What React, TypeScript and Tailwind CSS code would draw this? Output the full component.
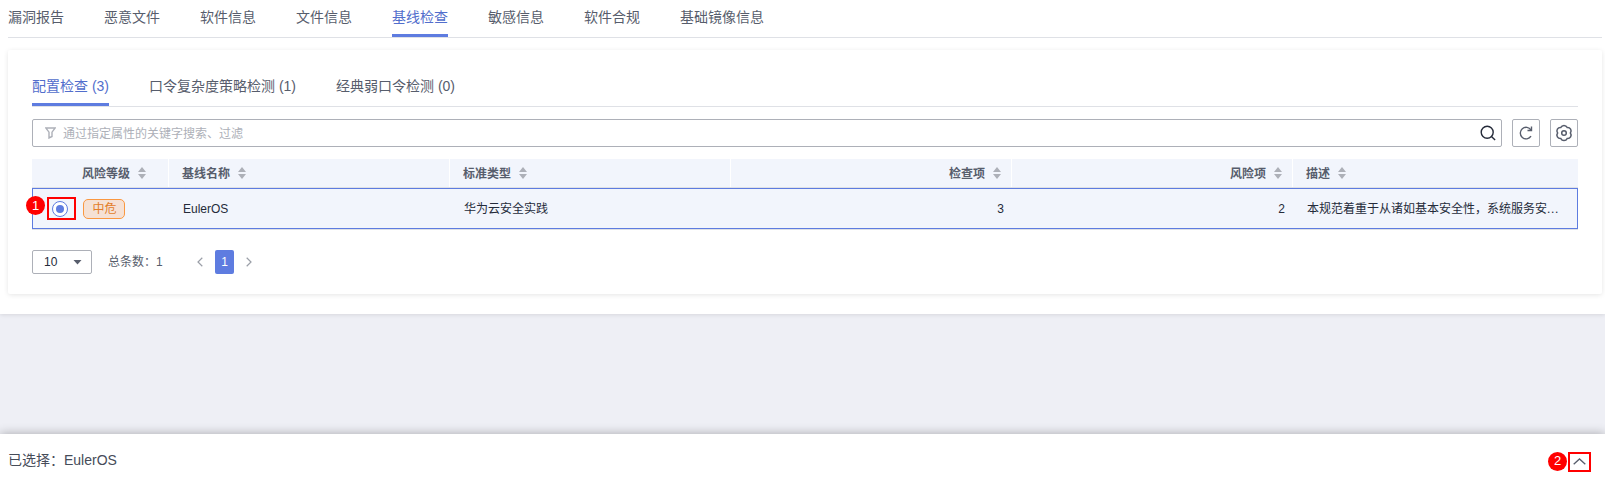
import type { ReactNode } from 'react';

const FONT = "font-['Liberation_Sans','Noto_Sans_CJK_SC',sans-serif]";

const topTabs = ['漏洞报告', '恶意文件', '软件信息', '文件信息', '基线检查', '敏感信息', '软件合规', '基础镜像信息'];
const subTabs = ['配置检查 (3)', '口令复杂度策略检测 (1)', '经典弱口令检测 (0)'];

function Sort() {
  return (
    <svg width="8" height="12" viewBox="0 0 8 12" fill="#adb0b8" className="mb-0.5 ml-2 shrink-0">
      <path d="M4 0 8 5H0zM4 12 0 7h8z" />
    </svg>
  );
}

function Tabs({ items, active }: { items: string[]; active: number }) {
  return (
    <div className="flex gap-10 border-b border-[#dfe1e6] text-sm text-[#575d6c]">
      {items.map((t, i) => (
        <button
          key={t}
          className={
            i === active
              ? 'h-[37px] whitespace-nowrap border-b-[3px] border-[#5e7ce0] text-[#526ecc]'
              : 'h-[37px] whitespace-nowrap border-b-[3px] border-transparent'
          }
        >
          {t}
        </button>
      ))}
    </div>
  );
}

function Badge({ n, className }: { n: number; className: string }) {
  return (
    <span className={`absolute flex size-[19px] items-center justify-center rounded-full bg-[#ff0000] text-[13px] text-white ${className}`}>
      {n}
    </span>
  );
}

function IconButton({ children }: { children: ReactNode }) {
  return (
    <button className="flex size-7 items-center justify-center rounded-xs border border-[#adb0b8] text-[#575d6c]">
      {children}
    </button>
  );
}

const COLS = 'grid grid-cols-[136px_281px_281px_281px_281px_286px]';

export default function App() {
  return (
    <div className={`flex h-[478px] flex-col overflow-hidden bg-[#eeeff5] text-[#252b3a] ${FONT}`}>
      <div className="h-[314px] shrink-0 bg-white pl-2 shadow-[0_1px_4px_rgba(0,0,0,0.1)]">
        <div className="pr-[3px]">
          <Tabs items={topTabs} active={4} />
          <section className="mt-3 h-[244px] rounded-xs px-6 pt-[19px] shadow-[0_1px_5px_rgba(0,0,0,0.1)]">
            <Tabs items={subTabs} active={0} />
            <div className="mt-3 flex gap-2.5">
              <div className="flex h-7 flex-1 items-center rounded-xs border border-[#adb0b8] pl-[13px] pr-[5px] text-xs text-[#adb0b8]">
                <svg width="11" height="12" viewBox="0 0 11 12" fill="none" stroke="currentColor" strokeWidth="1.4" className="-ml-px">
                  <path d="M.8 1h9.4L7 5.2V9.5L4 11V5.2z" />
                </svg>
                <span className="ml-[7px] flex-1 pt-0.5">通过指定属性的关键字搜索、过滤</span>
                <svg width="16" height="16" viewBox="0 0 16 16" fill="none" stroke="#252b3a" strokeWidth="1.4">
                  <circle cx="7.2" cy="7.2" r="6" />
                  <path d="m11.5 11.5 3.6 3.6" />
                </svg>
              </div>
              <IconButton>
                <svg width="16" height="16" viewBox="0 0 16 16" fill="none" stroke="currentColor" strokeWidth="1.4">
                  <path d="M13 5A5.8 5.8 0 1 0 13 11.2M13.5 1.5v4H9.5" />
                </svg>
              </IconButton>
              <IconButton>
                <svg width="18" height="18" viewBox="0 0 18 18" fill="none" stroke="currentColor" strokeWidth="1.5">
                  <path d="M5.8 3.46A3.5 3.5 0 0 1 12.2 3.46A3.5 3.5 0 0 1 15.4 9A3.5 3.5 0 0 1 12.2 14.54A3.5 3.5 0 0 1 5.8 14.54A3.5 3.5 0 0 1 2.6 9A3.5 3.5 0 0 1 5.8 3.46z" />
                  <circle cx="9" cy="9" r="2.3" />
                </svg>
              </IconButton>
            </div>
            <div className={`${COLS} mt-3 h-7 text-xs font-bold text-[#575d6c]`}>
              <div className="flex items-center bg-[#f2f5fc] pl-[50px] pt-0.5">风险等级<Sort /></div>
              <div className="ml-px flex items-center bg-[#f2f5fc] pl-[13px] pt-0.5">基线名称<Sort /></div>
              <div className="ml-px flex items-center bg-[#f2f5fc] pl-[13px] pt-0.5">标准类型<Sort /></div>
              <div className="ml-px flex items-center justify-end bg-[#f2f5fc] pr-2.5 pt-0.5">检查项<Sort /></div>
              <div className="ml-px flex items-center justify-end bg-[#f2f5fc] pr-2.5 pt-0.5">风险项<Sort /></div>
              <div className="ml-px flex items-center bg-[#f2f5fc] pl-[13px] pt-0.5">描述<Sort /></div>
            </div>
            <div className="relative h-[43px] border-y border-[#dfe1e6]">
              <div className={`${COLS} h-[41px] items-center border border-[#5e7ce0] bg-[#f2f5fc] text-xs`}>
                <div className="flex items-center pl-[19px]">
                  <span className="flex size-4 items-center justify-center rounded-full border border-[#5e7ce0] bg-white">
                    <span className="size-2 rounded-full bg-[#5e7ce0]" />
                  </span>
                  <span className="ml-[15px] flex h-5 w-[42px] items-center justify-center rounded-[5px] border border-[#fa9841] bg-[#f5e1d5] pl-px text-[#e37d29]">
                    中危
                  </span>
                </div>
                <div className="pl-3.5">EulerOS</div>
                <div className="pl-3.5">华为云安全实践</div>
                <div className="pr-2 text-right">3</div>
                <div className="pr-2 text-right">2</div>
                <div className="pl-3.5">
                  本规范着重于从诸如基本安全性，系统服务安<span className="tracking-[0.6px]">...</span>
                </div>
              </div>
              <span className="absolute left-[15px] top-[9px] h-[23px] w-[29px] border-2 border-[#ff0000]" />
              <Badge n={1} className="-left-1.5 top-2" />
            </div>
            <div className="mt-5 flex h-6 items-center text-xs">
              <div className="flex h-6 w-[60px] items-center justify-between rounded-xs border border-[#adb0b8] pl-[11px] pr-[9px]">
                10
                <svg width="9" height="5" viewBox="0 0 9 5" fill="#575d6c"><path d="M.5 0h8l-4 4.6z" /></svg>
              </div>
              <span className="ml-4 w-[89px] text-[#575d6c]">总条数：1</span>
              <svg width="6" height="10" viewBox="0 0 6 10" fill="none" stroke="#9b9fa8" strokeWidth="1.2"><path d="M5.3.8 1 5l4.3 4.2" /></svg>
              <span className="ml-3 flex h-6 w-[19px] items-center justify-center rounded-xs bg-[#5e7ce0] text-white">1</span>
              <svg width="6" height="10" viewBox="0 0 6 10" fill="none" stroke="#9b9fa8" strokeWidth="1.2" className="ml-3"><path d="M.7.8 5 5 .7 9.2" /></svg>
            </div>
          </section>
        </div>
      </div>
      <footer className="relative mt-[120px] flex h-11 shrink-0 items-center bg-white pl-2 pt-2 text-sm text-[#464c59] shadow-[0_0_10px_rgba(0,0,0,0.3)]">
        已选择：EulerOS
        <Badge n={2} className="left-[1548px] top-[18px]" />
        <button className="absolute left-[1568px] top-[18px] flex h-5 w-[23px] items-center justify-center border-2 border-[#ff0000]">
          <svg width="13" height="7" viewBox="0 0 13 7" fill="none" stroke="#575d6c" strokeWidth="1.3" className="-mt-px"><path d="M.7 6.3 6.5 1l5.8 5.3" /></svg>
        </button>
      </footer>
    </div>
  );
}
